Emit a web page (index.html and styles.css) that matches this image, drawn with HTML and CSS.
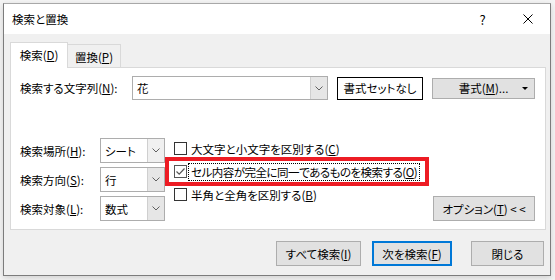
FILE: index.html
```html
<!DOCTYPE html>
<html lang="ja">
<head>
  <meta charset="UTF-8">
  <title>検索と置換</title>
  <link rel="stylesheet" href="styles.css">
</head>
<body>
  <div class="window">
    <div class="titlebar">
      <span class="title">検索と置換</span>
      <span class="tb-btn help">?</span>
      <span class="tb-btn close">
        <svg width="10" height="10" viewBox="0 0 10 10"><path d="M0.5 0.5 L9.5 9.5 M9.5 0.5 L0.5 9.5" stroke="#000" stroke-width="1" fill="none"/></svg>
      </span>
    </div>

    <div class="client">
      <!-- tabs -->
      <div class="tabs">
        <div class="tab active">検索(<u>D</u>)</div>
        <div class="tab">置換(<u>P</u>)</div>
      </div>

      <div class="panel">
        <div class="search-row">
          <span class="search-label">検索する文字列(<u>N</u>):</span>
          <div class="combo wide">
            <span class="combo-text">花</span>
            <span class="combo-arrow">
              <svg width="8" height="5" viewBox="0 0 8 5"><path d="M0.5 0.5 L4 4 L7.5 0.5" stroke="#606060" fill="none"/></svg>
            </span>
          </div>
          <div class="format-preview">書式セットなし</div>
          <div class="btn format-btn">書式(<u>M</u>)...<span class="caret"></span></div>
        </div>

        <div class="options">
          <div class="selects">
            <div class="select-row">
              <span class="select-label">検索場所(<u>H</u>):</span>
              <div class="combo small">
                <span class="combo-text">シート</span>
                <span class="combo-arrow light">
                  <svg width="8" height="5" viewBox="0 0 8 5"><path d="M0.5 0.5 L4 4 L7.5 0.5" stroke="#606060" fill="none"/></svg>
                </span>
              </div>
            </div>
            <div class="select-row">
              <span class="select-label">検索方向(<u>S</u>):</span>
              <div class="combo small">
                <span class="combo-text">行</span>
                <span class="combo-arrow">
                  <svg width="8" height="5" viewBox="0 0 8 5"><path d="M0.5 0.5 L4 4 L7.5 0.5" stroke="#606060" fill="none"/></svg>
                </span>
              </div>
            </div>
            <div class="select-row">
              <span class="select-label">検索対象(<u>L</u>):</span>
              <div class="combo small">
                <span class="combo-text">数式</span>
                <span class="combo-arrow">
                  <svg width="8" height="5" viewBox="0 0 8 5"><path d="M0.5 0.5 L4 4 L7.5 0.5" stroke="#606060" fill="none"/></svg>
                </span>
              </div>
            </div>
          </div>

          <div class="checks">
            <div class="check-row">
              <span class="box"></span>
              <span class="check-text">大文字と小文字を区別する(<u>C</u>)</span>
            </div>
            <div class="check-row marked">
              <span class="box checked">
                <svg width="11" height="11" viewBox="0 0 11 11"><path d="M1.5 5.5 L4.2 8.2 L9.5 2.5" stroke="#555" stroke-width="1.2" fill="none"/></svg>
              </span>
              <span class="check-text focus">セル内容が完全に同一であるものを検索する(<u>O</u>)</span>
            </div>
            <div class="check-row">
              <span class="box"></span>
              <span class="check-text">半角と全角を区別する(<u>B</u>)</span>
            </div>
          </div>

          <div class="btn option-btn">オプション(<u>T</u>) &lt; &lt;</div>
        </div>
      </div>

      <div class="actions">
        <div class="btn act find-all">すべて検索(<u>I</u>)</div>
        <div class="btn act find-next">次を検索(<u>F</u>)</div>
        <div class="btn act close-btn">閉じる</div>
      </div>
    </div>
  </div>
</body>
</html>
```

FILE: styles.css
```css
/* Basic styling */
* {
  margin: 0;
  padding: 0;
  box-sizing: border-box;
}

body {
  font-family: "Noto Sans CJK JP", "Noto Sans", sans-serif;
  font-size: 11.5px;
  font-feature-settings: "palt";
  color: #000;
  background: #f4f4f4;
  width: 555px;
  height: 280px;
  overflow: hidden;
  white-space: nowrap;
}

u {
  text-decoration: underline;
  text-underline-offset: 1px;
}

/* Dialog window */
.window {
  margin: 3px 0 0 3px;
  width: 548px;
  height: 273px;
  border: 1px solid #7c7c7c;
  border-top-color: #a8a8a8;
  background: #f0f0f0;
  box-shadow: 0 2px 6px rgba(0, 0, 0, 0.15);
  display: flex;
  flex-direction: column;
}

.titlebar {
  height: 30px;
  background: #fff;
  display: flex;
  align-items: center;
  flex-shrink: 0;
}

.title {
  padding-left: 8px;
  flex: 1;
}

.tb-btn {
  width: 45px;
  height: 30px;
  display: flex;
  align-items: center;
  justify-content: center;
}

.help {
  font-size: 13px;
}

.client {
  flex: 1;
  display: flex;
  flex-direction: column;
}

/* Tabs */
.tabs {
  display: flex;
  align-items: flex-end;
  padding: 8px 0 0 6px;
}

.tab {
  border: 1px solid #d9d9d9;
  border-bottom: none;
  display: flex;
  align-items: center;
  justify-content: center;
}

.tab.active {
  width: 58px;
  height: 26px;
  margin-bottom: -1px;
  background: #fff;
  position: relative;
  z-index: 1;
  padding-bottom: 1px;
}

.tab:not(.active) {
  width: 53px;
  height: 23px;
  border-left: none;
  padding-top: 1px;
}

.panel {
  margin: 0 4px 0 6px;
  height: 163px;
  background: #fff;
  border: 1px solid #d9d9d9;
  padding: 8px 10px 0 9px;
}

/* Search row */
.search-row {
  display: flex;
  align-items: center;
  height: 24px;
}

.search-label {
  width: 112px;
}

.combo {
  display: flex;
  background: #fff;
  border: 1px solid #adadad;
}

.combo.wide {
  width: 196px;
  height: 24px;
}

.combo.small {
  width: 65px;
  height: 25px;
}

.combo-text {
  flex: 1;
  padding-left: 4px;
  display: flex;
  align-items: center;
}

.combo-arrow {
  width: 17px;
  background: #e6e6e6;
  border-left: 1px solid #cfcfcf;
  display: flex;
  align-items: center;
  justify-content: center;
}

.combo-arrow.light {
  background: #f0f0f0;
}

.format-preview {
  margin-left: 9px;
  width: 86px;
  height: 23px;
  border: 1px solid #000;
  display: flex;
  align-items: center;
  justify-content: center;
}

.btn {
  background: #e1e1e1;
  border: 1px solid #adadad;
  display: flex;
  align-items: center;
  justify-content: center;
}

.format-btn {
  margin-left: 9px;
  width: 103px;
  height: 21px;
  position: relative;
}

.caret {
  position: absolute;
  right: 6px;
  top: 8px;
  border-left: 3px solid transparent;
  border-right: 3px solid transparent;
  border-top: 3px solid #000;
}

/* Option rows */
.options {
  margin-top: 38px;
  display: flex;
}

.selects {
  display: flex;
  flex-direction: column;
  gap: 4px;
}

.select-row {
  display: flex;
  align-items: center;
}

.select-label {
  width: 80px;
}

.checks {
  margin-left: 4px;
  display: flex;
  flex-direction: column;
  gap: 2px;
}

.check-row {
  width: 256px;
  height: 21px;
  padding-left: 5px;
  display: flex;
  align-items: center;
}

.check-row.marked {
  outline: 4px solid #ed1c24;
}

.box {
  width: 13px;
  height: 13px;
  flex-shrink: 0;
  border: 1px solid #333;
  background: #fff;
  display: flex;
  align-items: center;
  justify-content: center;
}

.box.checked {
  border-color: #555;
}

.check-text {
  margin-left: 2px;
  padding: 0 2px;
  line-height: 16px;
}

.check-text.focus {
  outline: 1px dotted #000;
  letter-spacing: -0.5px;
}

.option-btn {
  margin-left: auto;
  align-self: flex-end;
  width: 102px;
  height: 25px;
}

/* Bottom buttons */
.actions {
  display: flex;
  justify-content: flex-end;
  padding: 11px 6px 0 0;
}

.act {
  height: 25px;
}

.find-all {
  width: 85px;
}

.find-next {
  margin-left: 11px;
  width: 80px;
  border: 2px solid #0078d7;
}

.close-btn {
  margin-left: 19px;
  width: 73px;
}
```
